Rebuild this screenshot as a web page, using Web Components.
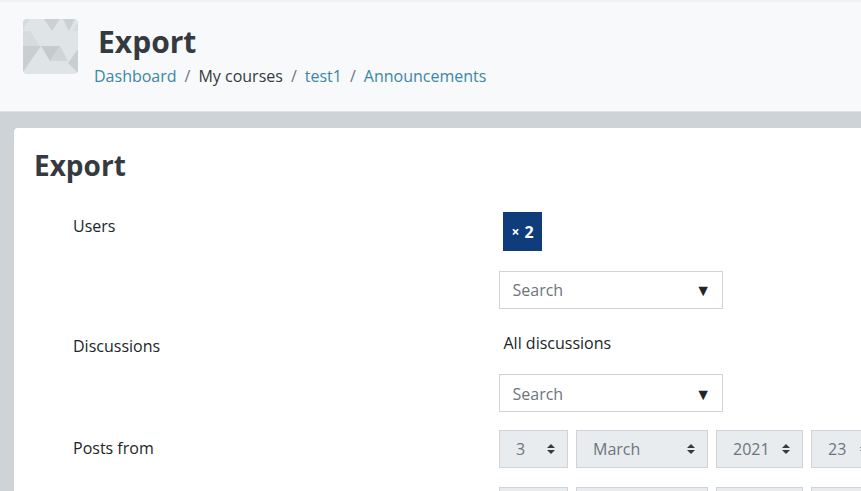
<!DOCTYPE html>
<html>
<head>
<meta charset="utf-8">
<title>Export</title>
<style>
html, body { margin: 0; height: 100%; overflow: hidden; }
body { background: #ced3d7; font-family: "Open Sans", sans-serif; font-size: 16px; color: #343a40; }
</style>
</head>
<body>
<page-header></page-header>
<export-card></export-card>

<script>
class PageHeader extends HTMLElement {
    constructor() {
        super();
        this.attachShadow({mode: 'open'});
        this.shadowRoot.innerHTML = `
            <style>
                :host {
                    display: flex;
                    height: 112px;
                    box-sizing: border-box;
                    padding: 17px 0 0 23px;
                    background: #f8f9fa;
                    border-top: 2px solid #f1f2f3;
                    border-bottom: 1px solid #dee2e6;
                }
                svg { display: block; border-radius: 4px; flex: none; }
                .text { margin-left: 16px; }
                h1 {
                    margin: 0 0 0 4px;
                    font: 700 30px/46px "Open Sans", sans-serif;
                    color: #343a40;
                }
                nav { font-size: 16px; line-height: 22px; color: #343a40; white-space: nowrap; }
                a { color: #3a87a5; text-decoration: none; }
                i { font-style: normal; color: #6c757d; padding: 0 8px; }
            </style>
            <svg width="55" height="55" viewBox="0 0 55 55">
                <rect width="55" height="55" fill="#dfe4e6"/>
                <polygon points="0,0 7,0 0,10" fill="#d6dbde"/>
                <polygon points="21,0 37,0 29,12" fill="#cbd0d3"/>
                <polygon points="40,0 52,0 46,12" fill="#cbd0d3"/>
                <polygon points="55,3 55,12 50,12" fill="#d6dbde"/>
                <polygon points="0,12 7,12 0,27" fill="#d6dbde"/>
                <polygon points="7,12 17,27 0,27" fill="#d6dbde"/>
                <polygon points="0,27 18,27 0,53" fill="#c9ced1"/>
                <polygon points="18,27 37,27 27,42" fill="#c5cacd"/>
                <polygon points="37,27 45,42 27,42" fill="#d0d5d8"/>
                <polygon points="55,30 45,44 55,54" fill="#c9ced1"/>
            </svg>
            <div class="text">
                <h1>Export</h1>
                <nav><a href="#">Dashboard</a><i>/</i>My courses<i>/</i><a href="#">test1</a><i>/</i><a href="#">Announcements</a></nav>
            </div>
        `;
    }
}

class SearchSelect extends HTMLElement {
    constructor() {
        super();
        this.attachShadow({mode: 'open'});
        this.shadowRoot.innerHTML = `
            <style>
                :host {
                    display: flex;
                    align-items: center;
                    justify-content: space-between;
                    box-sizing: border-box;
                    width: 224px;
                    height: 38px;
                    padding: 0 11px 0 12.5px;
                    background: #fff;
                    border: 1px solid #ced4da;
                    color: #6c757d;
                    font-size: 16px;
                }
                span { color: #212529; font-size: 16px; }
            </style>
            Search<span>&#9660;</span>
        `;
    }
}

class DateSelect extends HTMLElement {
    static get observedAttributes() { return ['w']; }
    constructor() {
        super();
        this.attachShadow({mode: 'open'});
        this.shadowRoot.innerHTML = `
            <style>
                :host {
                    display: flex;
                    align-items: center;
                    justify-content: space-between;
                    box-sizing: border-box;
                    flex: none;
                    height: 38px;
                    padding: 0 12px 0 16px;
                    background: #e9ecef;
                    border: 1px solid #ced4da;
                    color: #6c757d;
                    font-size: 16px;
                }
                svg { display: block; }
            </style>
            <slot></slot>
            <svg width="8" height="10" viewBox="0 0 8 10"><path d="M4 0 8 4H0ZM0 6H8L4 10Z" fill="#343a40"/></svg>
        `;
    }
    attributeChangedCallback(name, oldValue, newValue) {
        this.style.width = newValue + 'px';
    }
}

class FormRow extends HTMLElement {
    constructor() {
        super();
        this.attachShadow({mode: 'open'});
        this.shadowRoot.innerHTML = `
            <style>
                :host { display: grid; grid-template-columns: 426px 1fr; }
                .label { padding-top: var(--label-top, 3px); line-height: 22px; font-size: 16px; color: #212529; }
            </style>
            <div class="label"><slot name="label"></slot></div>
            <div><slot></slot></div>
        `;
    }
}

class ExportCard extends HTMLElement {
    constructor() {
        super();
        this.attachShadow({mode: 'open'});
        this.shadowRoot.innerHTML = `
            <style>
                :host {
                    display: block;
                    margin: 16px 0 0 14px;
                    height: 363px;
                    padding: 19px 0 0 20px;
                    box-sizing: border-box;
                    background: #fff;
                    border-radius: 4px 0 0 0;
                    overflow: hidden;
                }
                h2 { margin: 0; font: 700 28px/36px "Open Sans", sans-serif; color: #343a40; }
                .form { margin: 29px 0 0 39px; width: 900px; }
                .chip {
                    display: inline-flex; align-items: center; justify-content: center;
                    width: 39px; height: 39px; margin-left: 4px;
                    background: #0f3d7c; color: #fff; font-weight: 700; font-size: 16px;
                }
                .chip small { font-size: 14px; margin-right: 5px; }
                .chips { height: 59px; }
                .all { height: 42px; padding-left: 4.5px; line-height: 22px; font-size: 16px; color: #212529; }
                .discussions search-select { padding-top: 1px; }
                .posts { --label-top: 7px; margin-top: 18px; }
                .discussions { margin-top: 23px; }
                .dates { display: flex; gap: 8px; white-space: nowrap; }
                .next { margin-top: 19px; }
            </style>
            <h2>Export</h2>
            <div class="form">
                <form-row>
                    <span slot="label">Users</span>
                    <div class="chips"><span class="chip"><small>×</small>2</span></div>
                    <search-select></search-select>
                </form-row>
                <form-row class="discussions">
                    <span slot="label">Discussions</span>
                    <div class="all">All discussions</div>
                    <search-select></search-select>
                </form-row>
                <form-row class="posts">
                    <span slot="label">Posts from</span>
                    <div class="dates">
                        <date-select w="69">3</date-select>
                        <date-select w="132">March</date-select>
                        <date-select w="87">2021</date-select>
                        <date-select w="70">23</date-select>
                    </div>
                    <div class="dates next">
                        <date-select w="69"></date-select>
                        <date-select w="132"></date-select>
                        <date-select w="87"></date-select>
                        <date-select w="70"></date-select>
                    </div>
                </form-row>
            </div>
        `;
    }
}

customElements.define('page-header', PageHeader);
customElements.define('search-select', SearchSelect);
customElements.define('date-select', DateSelect);
customElements.define('form-row', FormRow);
customElements.define('export-card', ExportCard);
</script>
</body>
</html>
